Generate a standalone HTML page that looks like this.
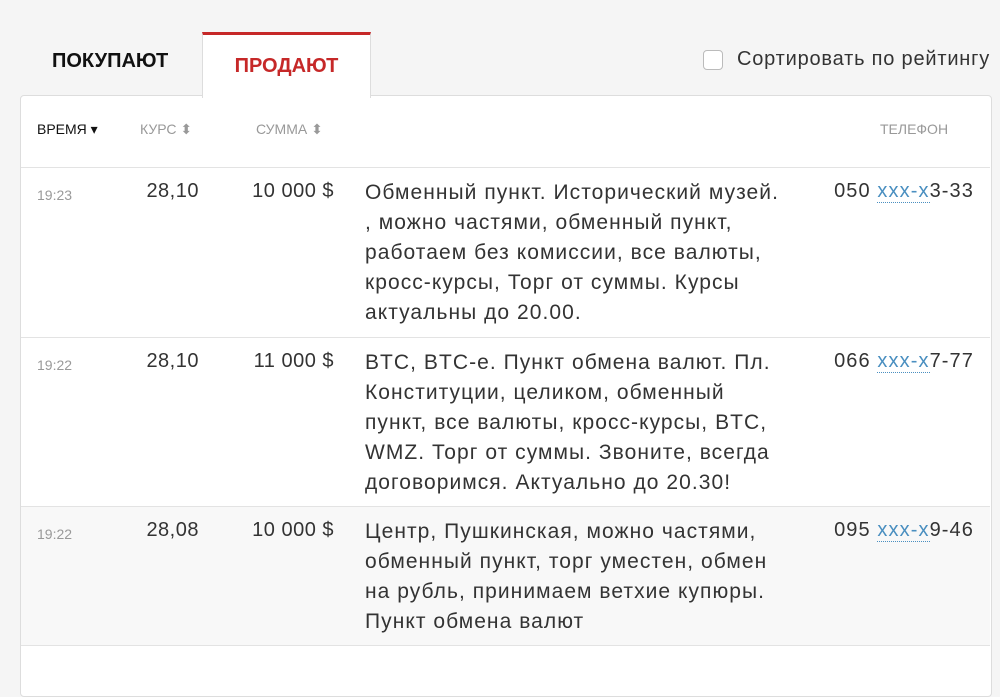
<!DOCTYPE html>
<html><head><meta charset="utf-8"><style>
body{margin:0;width:1000px;height:652px;background:#f5f5f5;font-family:"Liberation Sans","DejaVu Sans",sans-serif;overflow:hidden;position:relative;color:#333}
.tab1{position:absolute;left:52px;top:50px;font-size:20px;font-weight:bold;color:#111}
.tab2{position:absolute;left:202px;top:32px;width:169px;height:66px;background:#fff;border-top:3px solid #c62828;border-left:1px solid #ddd;border-right:1px solid #ddd;box-sizing:border-box;z-index:2;text-align:center;font-size:20px;font-weight:bold;color:#c62828;padding-top:20px}
.chk{position:absolute;left:703px;top:50px;width:18px;height:18px;border:1px solid #bbb;border-radius:4px;background:#fff}
.sort{position:absolute;left:737px;top:48px;font-size:20px;color:#333;letter-spacing:0.8px}
.card{position:absolute;left:20px;top:95px;width:970px;height:600px;background:#fff;border:1px solid #ddd;border-radius:4px}
.h{position:absolute;top:121px;font-size:14px;color:#999}
.row{position:absolute;left:21px;width:969px;border-top:1px solid #e3e3e3}
.t{position:absolute;left:16px;font-size:14px;color:#999;top:19px}
.r{position:absolute;right:791px;font-size:20px;top:12px;letter-spacing:0.5px}
.s{position:absolute;right:656px;font-size:20px;top:12px;letter-spacing:0.5px}
.d{position:absolute;left:344px;font-size:21px;line-height:30px;top:10px;white-space:nowrap;letter-spacing:1.05px}
.p{position:absolute;right:16px;font-size:20px;top:12px;letter-spacing:1.1px}
.p span{color:#4a8fc0;border-bottom:1px dotted #4a8fc0}
</style></head><body>
<div class="tab1">ПОКУПАЮТ</div>
<div class="tab2">ПРОДАЮТ</div>
<div class="chk"></div><div class="sort">Сортировать по рейтингу</div>
<div class="card"></div>
<div class="h" style="left:37px;color:#111">ВРЕМЯ ▾</div>
<div class="h" style="left:140px">КУРС ⬍</div>
<div class="h" style="left:256px">СУММА ⬍</div>
<div class="h" style="left:880px">ТЕЛЕФОН</div>
<div class="row" style="top:167px;height:170px"><div class="t">19:23</div><div class="r">28,10</div><div class="s">10 000 $</div><div class="d">Обменный пункт. Исторический музей.<br>, можно частями, обменный пункт,<br>работаем без комиссии, все валюты,<br>кросс-курсы, Торг от суммы. Курсы<br>актуальны до 20.00.</div><div class="p">050 <span>xxx-x</span>3-33</div></div>
<div class="row" style="top:337px;height:169px"><div class="t">19:22</div><div class="r">28,10</div><div class="s">11 000 $</div><div class="d">BTC, BTC-e. Пункт обмена валют. Пл.<br>Конституции, целиком, обменный<br>пункт, все валюты, кросс-курсы, BTC,<br>WMZ. Торг от суммы. Звоните, всегда<br>договоримся. Актуально до 20.30!</div><div class="p">066 <span>xxx-x</span>7-77</div></div>
<div class="row" style="top:506px;height:139px;background:#f8f8f8"><div class="t">19:22</div><div class="r">28,08</div><div class="s">10 000 $</div><div class="d">Центр, Пушкинская, можно частями,<br>обменный пункт, торг уместен, обмен<br>на рубль, принимаем ветхие купюры.<br>Пункт обмена валют</div><div class="p">095 <span>xxx-x</span>9-46</div></div>
<div class="row" style="top:645px;height:10px"></div>
</body></html>
